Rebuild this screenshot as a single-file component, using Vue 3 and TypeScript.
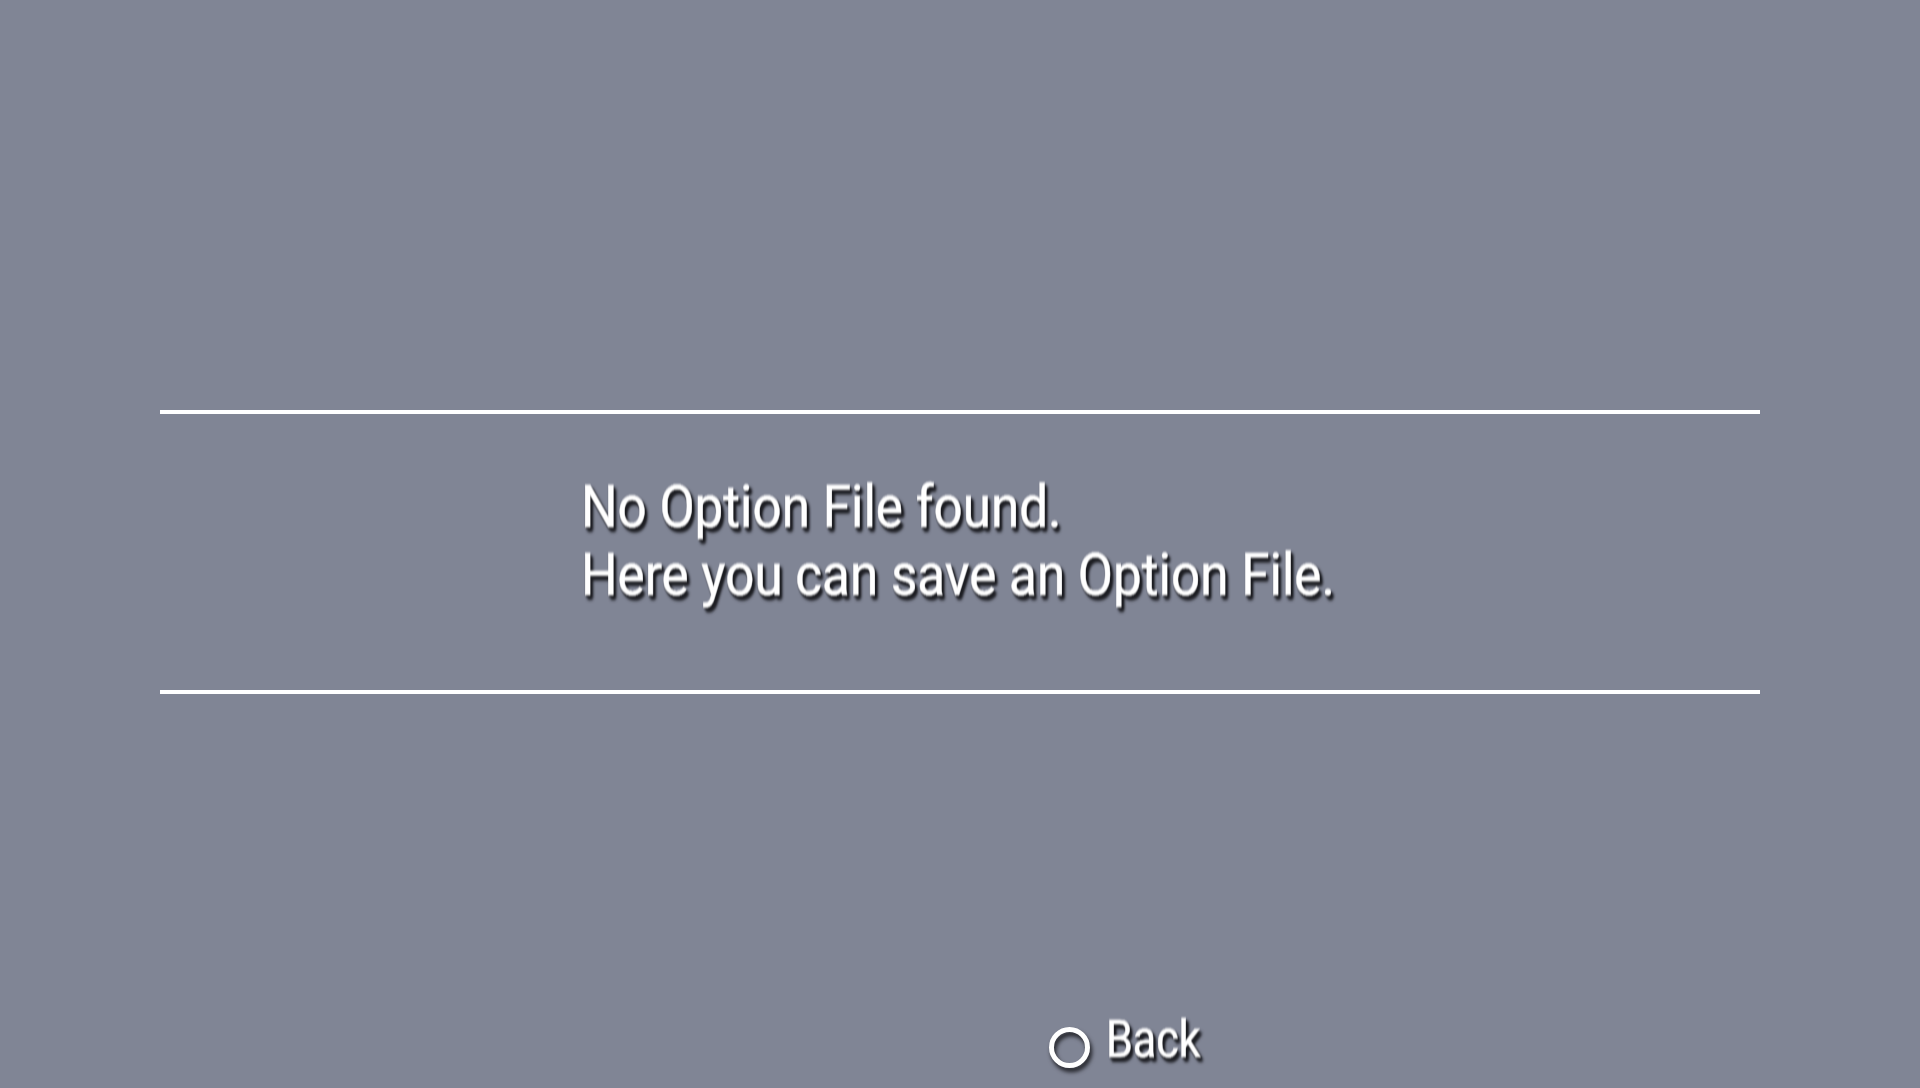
<script setup lang="ts">
const lines: string[] = ["No Option File found.", "Here you can save an Option File."];
</script>

<template>
  <main class="screen">
    <section class="panel">
      <div class="message">
        <p v-for="line in lines" :key="line" class="line">{{ line }}</p>
      </div>
    </section>
    <footer class="footer">
      <span class="ring"></span>
      <span class="back">Back</span>
    </footer>
  </main>
</template>

<style>
html, body { margin: 0; background: #808595; }
</style>

<style scoped>
.screen {
  width: 1920px;
  height: 1088px;
  box-sizing: border-box;
  padding-top: 410px;
  background: #808595;
  display: flex;
  flex-direction: column;
  overflow: hidden;
  font-family: Roboto, "Liberation Sans", sans-serif;
  color: #fff;
}
.panel {
  margin: 0 160px;
  height: 284px;
  box-sizing: border-box;
  border-top: 4px solid #fff;
  border-bottom: 4px solid #fff;
  padding: 59px 0 0 421px;
}
.message {
  transform: scaleX(0.853);
  transform-origin: left top;
  width: 1000px;
  filter: blur(0.9px);
}
.line {
  margin: 0;
  font-size: 60px;
  font-weight: 400;
  line-height: 68px;
  white-space: nowrap;
  -webkit-text-stroke: 0.5px #fff;
  text-shadow: 3px 5px 3px #1c1d22, 3px 3px 3px #1c1d22, 1px 2px 2px #1c1d22;
}
.footer {
  margin-top: 306px;
  margin-left: 1049px;
  display: flex;
  align-items: flex-start;
  gap: 16px;
}
.ring {
  width: 31px;
  height: 31px;
  margin-top: 27px;
  flex: none;
  border: 5px solid #fff;
  border-radius: 50%;
  filter: drop-shadow(2px 4px 2px #1c1d22) blur(0.6px);
}
.back {
  font-size: 51px;
  font-weight: 400;
  line-height: 60px;
  display: block;
  margin-top: 10px;
  transform: scaleX(0.845);
  transform-origin: left top;
  filter: blur(0.9px);
  -webkit-text-stroke: 0.5px #fff;
  text-shadow: 3px 5px 3px #1c1d22, 3px 3px 3px #1c1d22, 1px 2px 2px #1c1d22;
}
</style>
